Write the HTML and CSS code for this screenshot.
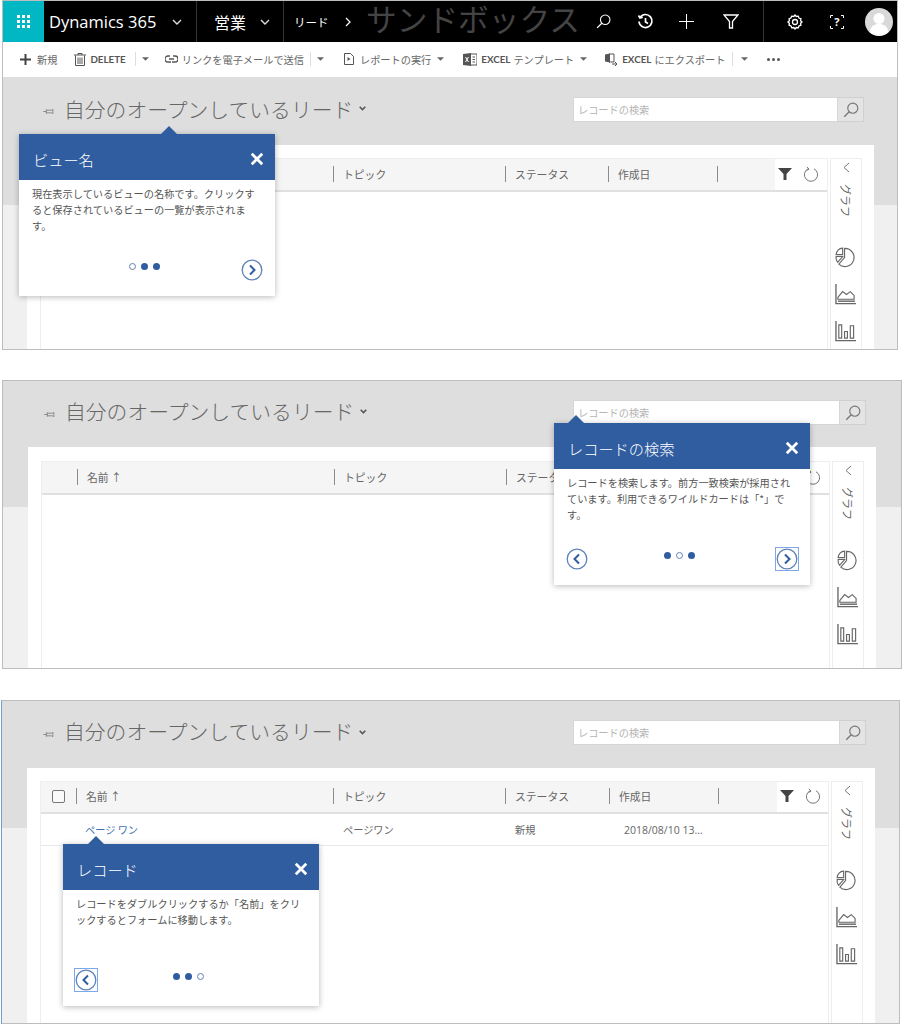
FILE: index.html
```html
<!DOCTYPE html>
<html lang="ja">
<head>
<meta charset="utf-8">
<title>リード</title>
<link rel="stylesheet" href="styles.css">
</head>
<body>
<svg class="defs" width="0" height="0" aria-hidden="true">
  <symbol id="i-search" viewBox="0 0 20 20"><circle cx="12" cy="8" r="5.600" fill="none" stroke="currentColor" stroke-width="1.300"/><path d="M8 12 2.500 17.500" fill="none" stroke="currentColor" stroke-width="1.500"/></symbol>
  <symbol id="i-chev" viewBox="0 0 10 6"><path d="M1 1l4 4 4-4" fill="none" stroke="currentColor" stroke-width="1.400"/></symbol>
  <symbol id="i-chev-bold" viewBox="0 0 10 7"><path d="M1 1l4 4 4-4" fill="none" stroke="currentColor" stroke-width="2.200"/></symbol>
  <symbol id="i-caret" viewBox="0 0 8 4"><path d="M0 0h8L4 4z" fill="currentColor"/></symbol>
  <symbol id="i-pin" viewBox="0 0 12 8"><path d="M0 4h3.500M3.500 1.500v5M3.500 2.500h6l1.500-1v5l-1.500-1h-6" fill="none" stroke="currentColor" stroke-width=".9"/></symbol>
  <symbol id="i-x" viewBox="0 0 12 12"><path d="M1.500 1.500l9 9M10.500 1.500l-9 9" fill="none" stroke="currentColor" stroke-width="2.400"/></symbol>
  <symbol id="i-next" viewBox="0 0 22 22"><circle cx="11" cy="11" r="9.800" fill="#fff" stroke="#5f83b8" stroke-width="1.300"/><path d="M9 6.500l4.500 4.500L9 15.500" fill="none" stroke="#2f5d9f" stroke-width="2"/></symbol>
  <symbol id="i-prev" viewBox="0 0 22 22"><circle cx="11" cy="11" r="9.800" fill="#fff" stroke="#5f83b8" stroke-width="1.300"/><path d="M13 6.500L8.500 11l4.500 4.500" fill="none" stroke="#2f5d9f" stroke-width="2"/></symbol>
  <symbol id="i-funnel" viewBox="0 0 14 12"><path d="M0 0h14L8.500 6v6h-3V6z" fill="currentColor"/></symbol>
  <symbol id="i-refresh" viewBox="0 0 16 16"><path d="M5 2.800A6.600 6.600 0 1 0 11 2.800" fill="none" stroke="currentColor" stroke-width="1"/><path d="M4 .8l2 2.400-2.600 1.400" fill="none" stroke="currentColor" stroke-width="1"/></symbol>
  <symbol id="i-pie" viewBox="0 0 22 22"><g fill="none" stroke="currentColor" stroke-width="1.200"><path d="M10 1.500A9.500 9.500 0 1 1 4 18L10 11z"/><path d="M8 1.200V8H1.200A7 7 0 0 1 8 1.200zM1.200 10H8l-5.300 6A8 8 0 0 1 1.200 10z"/></g></symbol>
  <symbol id="i-area" viewBox="0 0 22 22"><g fill="none" stroke="currentColor"><path d="M1 0v20.500h21" stroke-width="1.400"/><path d="M3 14l5-6 4 3 4-3 4 4v4H3z" stroke-width="1.200"/><path d="M3 18h18" stroke-width="1.500"/></g></symbol>
  <symbol id="i-bars" viewBox="0 0 22 22"><g fill="none" stroke="currentColor"><path d="M1 0v20.500h21" stroke-width="1.400"/><path d="M4 4h3v14H4zM10 11h3v7h-3zM16 5h3.500v13H16z" stroke-width="1.200"/></g></symbol>
</svg>

<section class="shot shot-a">
  <header class="topbar">
    <div class="waffle"><svg width="14" height="14" viewBox="0 0 14 14"><path fill="#fff" d="M0 0h3v3H0zM5 0h3v3H5zM10 0h3v3h-3zM0 5h3v3H0zM5 5h3v3H5zM10 5h3v3h-3zM0 10h3v3H0zM5 10h3v3H5zM10 10h3v3h-3z"/></svg></div>
    <div class="seg seg-app"><span class="app-name">Dynamics 365</span><svg class="nav-chev" width="10" height="6"><use href="#i-chev"/></svg></div>
    <div class="seg seg-area"><span class="area-name">営業</span><svg class="nav-chev" width="10" height="6"><use href="#i-chev"/></svg></div>
    <div class="seg-crumb"><span class="crumb">リード</span><svg class="crumb-sep" width="6" height="10" viewBox="0 0 6 10"><path d="M1 1l4 4-4 4" fill="none" stroke="#fff" stroke-width="1.200"/></svg></div>
    <span class="org">サンドボックス</span>
    <div class="nav-tools">
      <span class="tool"><svg width="17" height="17"><use href="#i-search"/></svg></span>
      <span class="tool"><svg width="17" height="17" viewBox="0 0 17 17"><path d="M3 4.500A6.500 6.500 0 1 1 2 8.500M1.500 2.500L3 5l2.800-.8M8.500 5v4l2.500 1.500" fill="none" stroke="currentColor" stroke-width="1.700"/></svg></span>
      <span class="tool tool-plus"><svg width="15" height="15" viewBox="0 0 15 15"><path d="M7.500 0v15M0 7.500h15" stroke="currentColor" stroke-width="1"/></svg></span>
      <span class="tool"><svg width="16" height="15" viewBox="0 0 16 15"><path d="M1 1h14L9.500 7.500V14h-3V7.500z" fill="none" stroke="currentColor" stroke-width="1.300"/></svg></span>
    </div>
    <div class="nav-user">
      <span class="tool"><svg width="16" height="16" viewBox="0 0 16 16"><circle cx="8" cy="8" r="2.500" fill="none" stroke="currentColor" stroke-width="1.300"/><path d="M8 1l1.300 1.500 2-.3.7 1.900 1.900.7-.3 2L15 8l-1.400 1.200.3 2-1.900.7-.7 1.900-2-.3L8 15l-1.300-1.500-2 .3-.7-1.900-1.900-.7.3-2L1 8l1.400-1.200-.3-2L4 3.800l.7-1.600 2 .3z" fill="none" stroke="currentColor" stroke-width="1.300"/></svg></span>
      <span class="tool help-tool"><svg class="help-frame" width="14" height="14" viewBox="0 0 14 14"><path d="M.5 3V.5H3M11 .5h2.500V3M.5 11v2.500H3M11 13.500h2.500V11" fill="none" stroke="#fff"/></svg>?</span>
      <span class="avatar"><svg width="28" height="28" viewBox="0 0 28 28"><circle cx="14" cy="14" r="14" fill="#d9d9d9"/><circle cx="14" cy="10.500" r="5.500" fill="#fff"/><path d="M4.500 24c1-6 5-8 9.500-8s8.500 2 9.500 8a14 14 0 0 1-19 0z" fill="#fff"/></svg></span>
    </div>
  </header>

  <nav class="cmdbar">
    <span class="cmd cmd-new"><svg width="11" height="11" viewBox="0 0 11 11"><path d="M5.500 0v11M0 5.500h11" stroke="#444" stroke-width="2"/></svg>新規</span>
    <span class="cmd cmd-delete"><svg width="12" height="13" viewBox="0 0 12 13"><path d="M0 2h12M4 2V.5h4V2M1.500 2.500v10h9v-10M4 4.500v6.500M6 4.500v6.500M8 4.500v6.500" fill="none" stroke="#555"/></svg><b>DELETE</b></span>
    <span class="split"></span><svg class="caret caret-a" width="7" height="4"><use href="#i-caret"/></svg>
    <span class="cmd cmd-link"><svg width="13" height="8" viewBox="0 0 13 8"><path d="M5 1H3a3 3 0 0 0 0 6h3M8 1h2a3 3 0 0 1 0 6H7M4 4h5" fill="none" stroke="#555" stroke-width="1.300"/></svg>リンクを電子メールで送信</span>
    <span class="split"></span><svg class="caret caret-a" width="7" height="4"><use href="#i-caret"/></svg>
    <span class="cmd cmd-report"><svg width="10" height="12" viewBox="0 0 10 12"><path d="M.5.500h6l3 3v8h-9z" fill="none" stroke="#555"/><path d="M3.500 4l3 2-3 2z" fill="#555"/></svg>レポートの実行</span>
    <svg class="caret caret-b" width="7" height="4"><use href="#i-caret"/></svg>
    <span class="cmd cmd-excel"><svg width="14" height="13" viewBox="0 0 14 13"><path d="M8 1h6v11H8" fill="none" stroke="#555"/><path d="M9.500 4H12M9.500 6.500H12M9.500 9H12" stroke="#555"/><path d="M0 1l8-1v13l-8-1z" fill="#555"/><path d="M2.500 4l3 5M5.500 4l-3 5" stroke="#fff"/></svg><b>EXCEL</b> テンプレート</span>
    <svg class="caret caret-b" width="7" height="4"><use href="#i-caret"/></svg>
    <span class="cmd cmd-export"><svg width="13" height="13" viewBox="0 0 13 13"><path d="M4 1h5v8H4" fill="none" stroke="#555"/><path d="M0 1.500L5 .5v9l-5-1z" fill="#555"/><path d="M7 11h5M10 9l2 2-2 2" fill="none" stroke="#555"/></svg><b>EXCEL</b> にエクスポート</span>
    <span class="split split-last"></span><svg class="caret caret-last" width="7" height="4"><use href="#i-caret"/></svg>
    <span class="more"><i></i><i></i><i></i></span>
  </nav>

  <div class="content">
    <div class="viewbar">
      <svg class="pin" width="11" height="7"><use href="#i-pin"/></svg>
      <h1 class="view-title">自分のオープンしているリード</h1>
      <svg class="view-chev" width="7" height="5"><use href="#i-chev-bold"/></svg>
      <div class="search"><span class="search-input">レコードの検索</span><span class="search-btn"><svg width="18" height="18"><use href="#i-search"/></svg></span></div>
    </div>
    <div class="card">
      <div class="grid">
        <div class="grid-head">
          <div class="th th-check"></div>
          <div class="th th-name"><span>名前 ↑</span></div>
          <div class="th th-topic"><span>トピック</span></div>
          <div class="th th-status"><span>ステータス</span></div>
          <div class="th th-date"><span>作成日</span></div>
          <div class="th th-end"><span></span></div>
          <div class="grid-tools"><svg class="funnel" width="14" height="12"><use href="#i-funnel"/></svg><svg class="refresh" width="16" height="16"><use href="#i-refresh"/></svg></div>
        </div>
      </div>
      <aside class="side">
        <svg class="side-chev" width="7" height="11" viewBox="0 0 7 11"><path d="M6 1L1 5.500 6 10" fill="none" stroke="currentColor"/></svg>
        <span class="side-label">グラフ</span>
        <svg class="side-pie" width="21" height="21"><use href="#i-pie"/></svg>
        <svg class="side-icon" width="21" height="21"><use href="#i-area"/></svg>
        <svg class="side-icon" width="21" height="21"><use href="#i-bars"/></svg>
      </aside>
    </div>
  </div>

  <div class="pop pop-a">
    <div class="pop-head"><span>ビュー名</span><svg width="14" height="14"><use href="#i-x"/></svg></div>
    <p class="pop-text">現在表示しているビューの名称です。クリックすると保存されているビューの一覧が表示されます。</p>
    <div class="pop-foot">
      <span class="pop-nav"></span>
      <span class="dots"><i class="dot dot-on"></i><i class="dot"></i><i class="dot"></i></span>
      <span class="pop-nav pop-nav-end"><svg width="22" height="22"><use href="#i-next"/></svg></span>
    </div>
  </div>
</section>

<section class="shot shot-b">
  <div class="content">
    <div class="viewbar">
      <svg class="pin" width="11" height="7"><use href="#i-pin"/></svg>
      <h1 class="view-title">自分のオープンしているリード</h1>
      <svg class="view-chev" width="7" height="5"><use href="#i-chev-bold"/></svg>
      <div class="search"><span class="search-input">レコードの検索</span><span class="search-btn"><svg width="18" height="18"><use href="#i-search"/></svg></span></div>
    </div>
    <div class="card">
      <div class="grid">
        <div class="grid-head">
          <div class="th th-check"></div>
          <div class="th th-name"><span>名前 ↑</span></div>
          <div class="th th-topic"><span>トピック</span></div>
          <div class="th th-status"><span>ステータス</span></div>
          <div class="th th-date"><span>作成日</span></div>
          <div class="th th-end"><span></span></div>
          <div class="grid-tools"><svg class="funnel" width="14" height="12"><use href="#i-funnel"/></svg><svg class="refresh" width="16" height="16"><use href="#i-refresh"/></svg></div>
        </div>
      </div>
      <aside class="side">
        <svg class="side-chev" width="7" height="11" viewBox="0 0 7 11"><path d="M6 1L1 5.500 6 10" fill="none" stroke="currentColor"/></svg>
        <span class="side-label">グラフ</span>
        <svg class="side-pie" width="21" height="21"><use href="#i-pie"/></svg>
        <svg class="side-icon" width="21" height="21"><use href="#i-area"/></svg>
        <svg class="side-icon" width="21" height="21"><use href="#i-bars"/></svg>
      </aside>
    </div>
  </div>

  <div class="pop pop-b">
    <div class="pop-head"><span>レコードの検索</span><svg width="14" height="14"><use href="#i-x"/></svg></div>
    <p class="pop-text">レコードを検索します。前方一致検索が採用されています。利用できるワイルドカードは「*」です。</p>
    <div class="pop-foot">
      <span class="pop-nav"><svg width="22" height="22"><use href="#i-prev"/></svg></span>
      <span class="dots"><i class="dot"></i><i class="dot dot-on"></i><i class="dot"></i></span>
      <span class="pop-nav pop-nav-end pop-focus"><svg width="22" height="22"><use href="#i-next"/></svg></span>
    </div>
  </div>
</section>

<section class="shot shot-c">
  <div class="content">
    <div class="viewbar">
      <svg class="pin" width="11" height="7"><use href="#i-pin"/></svg>
      <h1 class="view-title">自分のオープンしているリード</h1>
      <svg class="view-chev" width="7" height="5"><use href="#i-chev-bold"/></svg>
      <div class="search"><span class="search-input">レコードの検索</span><span class="search-btn"><svg width="18" height="18"><use href="#i-search"/></svg></span></div>
    </div>
    <div class="card">
      <div class="grid">
        <div class="grid-head">
          <div class="th th-check"><i class="checkbox"></i></div>
          <div class="th th-name"><span>名前 ↑</span></div>
          <div class="th th-topic"><span>トピック</span></div>
          <div class="th th-status"><span>ステータス</span></div>
          <div class="th th-date"><span>作成日</span></div>
          <div class="th th-end"><span></span></div>
          <div class="grid-tools"><svg class="funnel" width="14" height="12"><use href="#i-funnel"/></svg><svg class="refresh" width="16" height="16"><use href="#i-refresh"/></svg></div>
        </div>
        <div class="grid-row">
          <div class="td td-check"></div>
          <div class="td th-name td-link">ページ ワン</div>
          <div class="td th-topic">ページワン</div>
          <div class="td th-status">新規</div>
          <div class="td th-date td-date">2018/08/10 13…</div>
        </div>
      </div>
      <aside class="side">
        <svg class="side-chev" width="7" height="11" viewBox="0 0 7 11"><path d="M6 1L1 5.500 6 10" fill="none" stroke="currentColor"/></svg>
        <span class="side-label">グラフ</span>
        <svg class="side-pie" width="21" height="21"><use href="#i-pie"/></svg>
        <svg class="side-icon" width="21" height="21"><use href="#i-area"/></svg>
        <svg class="side-icon" width="21" height="21"><use href="#i-bars"/></svg>
      </aside>
    </div>
  </div>

  <div class="pop pop-c">
    <div class="pop-head"><span>レコード</span><svg width="14" height="14"><use href="#i-x"/></svg></div>
    <p class="pop-text">レコードをダブルクリックするか「名前」をクリックするとフォームに移動します。</p>
    <div class="pop-foot">
      <span class="pop-nav pop-focus"><svg width="22" height="22"><use href="#i-prev"/></svg></span>
      <span class="dots"><i class="dot"></i><i class="dot"></i><i class="dot dot-on"></i></span>
      <span class="pop-nav"></span>
    </div>
  </div>
</section>
</body>
</html>
```

FILE: styles.css
```css
* { box-sizing: border-box; }
html, body { margin: 0; padding: 0; background: #fff; }
body {
  width: 902px;
  height: 1024px;
  overflow: hidden;
  font-family: "Noto Sans CJK JP", "Open Sans", sans-serif;
  color: #555;
}
.defs { position: absolute; }

/* screenshot frames */
.shot {
  position: relative;
  overflow: visible;
  border: 1px solid #bdbdbd;
  display: flex;
  flex-direction: column;
}
.shot-a { margin-left: 2px; width: 896px; height: 350px; }
.shot-b { margin: 30px 0 0 2px; width: 900px; height: 289px; }
.shot-c { margin: 31px 0 0 1px; width: 899px; height: 324px; border-left-color: #6f9fd0; }

/* top navigation */
.topbar { display: flex; align-items: center; height: 41px; background: #000; color: #fff; flex: none; }
.waffle { width: 41px; height: 41px; background: #00b7c3; display: flex; align-items: center; justify-content: center; }
.seg { display: flex; align-items: center; height: 41px; border-right: 1px solid #333; }
.seg-app { width: 153px; padding-left: 5px; }
.seg-area { width: 87px; padding-left: 17px; }
.app-name { font-family: "Open Sans", sans-serif; font-size: 16.500px; width: 123px; white-space: nowrap; }
.area-name { font-size: 16px; width: 46px; }
.nav-chev { color: #ddd; }
.seg-crumb { display: flex; align-items: center; padding-left: 10px; width: 82px; font-size: 11.500px; }
.crumb { width: 51px; }
.crumb-sep { flex: none; }
.org { align-self: flex-start; font-size: 30.700px; line-height: 33px; color: #444; white-space: nowrap; width: 216px; height: 33px; }
.nav-tools { display: flex; height: 41px; align-items: center; padding-right: 11px; border-right: 1px solid #333; }
.tool { width: 42.500px; display: flex; justify-content: center; align-items: center; color: #fff; }
.tool-plus { padding-right: 3px; }
.nav-user { display: flex; align-items: center; padding-left: 10px; }
.help-tool { position: relative; font-size: 11px; font-weight: 700; font-family: "Open Sans", sans-serif; margin-left: -1px; }
.help-frame { position: absolute; left: 14px; top: 1px; }
.avatar { display: flex; margin-left: 7px; }

/* command bar */
.cmdbar { display: flex; align-items: center; height: 35px; background: #fff; border-top: 1px solid #fff; padding-bottom: 2px; font-size: 10.200px; color: #666; flex: none; white-space: nowrap; }
.cmd { display: flex; align-items: center; }
.cmd b { font-family: "Lato", "Open Sans", sans-serif; font-weight: 700; font-size: 9.800px; color: #555; margin-right: 3px; }
.cmd svg { flex: none; margin-right: 4px; }
.cmd-new { margin-left: 17px; }
.cmd-new svg { margin-right: 6px; }
.cmd-delete { margin-left: 17px; }
.cmd-link { margin-left: 16px; }
.cmd-report { margin-left: 20px; }
.cmd-report svg { margin-right: 6px; }
.cmd-excel { margin-left: 19px; }
.cmd-export { margin-left: 18px; }
.split { width: 1px; height: 14px; background: #ddd; margin-left: 6px; }
.split-last { margin-left: 7px; }
.caret { color: #666; flex: none; }
.caret-a { margin-left: 6px; }
.caret-b { margin-left: 6px; }
.caret-last { margin-left: 8px; }
.more { display: flex; gap: 2px; margin-left: 19px; }
.more i { width: 3px; height: 3px; border-radius: 50%; background: #555; }

/* page body */
.content {
  flex: 1;
  min-height: 0;
  display: flex;
  flex-direction: column;
  background: linear-gradient(#dedede 0 128px, #f0f0f0 128px);
}
.shot-b .content { background: linear-gradient(#dedede 0 126px, #f0f0f0 126px); }
.shot-c .content { background: linear-gradient(#dedede 0 127px, #f0f0f0 127px); }
.viewbar { display: flex; align-items: flex-start; height: 68px; padding-left: 40px; flex: none; }
.shot-b .viewbar { height: 66px; padding-left: 41px; }
.shot-c .viewbar { height: 67px; padding-left: 41px; }
.pin { color: #777; margin-top: 31px; flex: none; }
.shot-b .pin, .shot-c .pin { margin-top: 30px; }
.view-title { margin: 16px 0 0 10px; font-weight: 300; font-size: 20.800px; line-height: 32px; color: #666; white-space: nowrap; width: 295px; }
.shot-b .view-title, .shot-c .view-title { margin-top: 14px; }
.view-chev { color: #555; margin-top: 29px; flex: none; }
.shot-b .view-chev { margin-top: 28px; }
.search { display: flex; margin: 20px 33px 0 auto; height: 25px; }
.shot-b .search { margin-top: 19px; margin-right: 35px; }
.shot-c .search { margin-top: 19px; margin-right: 33px; }
.search-input { width: 265px; background: #fff; border: 1px solid #d6d6d6; padding-left: 4px; font-size: 10.200px; line-height: 24px; color: #b5b5b5; }
.shot-b .search-input, .shot-c .search-input { width: 267px; }
.search-btn { width: 26px; background: #e4e4e4; border: 1px solid #d0d0d0; border-left: none; display: flex; align-items: center; justify-content: center; color: #777; }

/* card */
.card { flex: 1; min-height: 0; display: flex; background: #fff; margin: 0 23px 0 24px; padding: 13px 12px 0 13px; gap: 2px; }
.shot-b .card { margin: 0 25px 0 25px; padding-top: 14px; }
.shot-c .card { margin: 0 24px 0 25px; }
.grid { flex: 1; border-left: 1px solid #eee; border-right: 1px solid #eee; min-width: 0; }
.grid-head { display: flex; align-items: stretch; height: 34px; background: #f5f5f5; border-top: 1px solid #eee; border-bottom: 2px solid #e0e0e0; padding-bottom: 2px; font-size: 10.800px; color: #666; }
.shot-c .grid-head { height: 33px; }
.th { display: flex; align-items: center; flex: none; }
.th span { display: block; height: 16px; line-height: 16px; padding-left: 9px; border-left: 1px solid #8c8c8c; }
.th-check { width: 35px; padding-left: 11px; }
.th-name { width: 257px; }
.th-topic { width: 172px; }
.th-status { width: 103px; }
.shot-c .th-status { width: 104px; }
.th-date { width: 109px; }
.th-end { width: 20px; }
.checkbox { display: block; width: 13px; height: 13px; border: 1px solid #777; border-radius: 2px; background: #fafafa; }
.grid-tools { margin-left: auto; width: 52px; margin-bottom: -2px; background: #fff; display: flex; align-items: center; padding: 0 0 2px 3px; gap: 11px; }
.shot-c .grid-tools { width: 51px; }
.funnel { color: #444; }
.refresh { color: #777; }
.grid-row { display: flex; height: 32px; align-items: center; border-bottom: 1px solid #e8e8e8; font-size: 10.200px; color: #666; }
.td { flex: none; padding-left: 10px; white-space: nowrap; }
.td-check { width: 35px; }
.td-link { color: #3a6fb0; padding-left: 9px; }
.td-date { padding-left: 15px; font-family: "Open Sans", "Noto Sans CJK JP", sans-serif; font-size: 10.500px; }

/* side rail */
.side { width: 32px; flex: none; border: 1px solid #eee; border-bottom: none; display: flex; flex-direction: column; align-items: center; color: #666; }
.side-chev { margin-top: 3px; color: #777; }
.side-label { writing-mode: vertical-rl; text-orientation: sideways; font-size: 11px; line-height: 14px; margin-top: 11px; color: #666; }
.side-pie { margin-top: 30px; margin-right: 2px; }
.side-icon { margin-top: 16px; margin-right: 2px; }

/* tour popover */
.pop { position: absolute; width: 256px; height: 162px; background: #fff; box-shadow: 0 1px 6px rgba(0, 0, 0, .28); display: flex; flex-direction: column; }
.pop::before { content: ""; position: absolute; top: -8px; width: 0; height: 0; border-left: 8px solid transparent; border-right: 8px solid transparent; border-bottom: 8px solid #2f5d9f; }
.pop-a { left: 16px; top: 133px; }
.pop-a::before { left: 142px; }
.pop-b { left: 551px; top: 42px; }
.pop-b::before { left: 14px; }
.pop-c { left: 61px; top: 143px; }
.pop-c::before { left: 25px; }
.pop-head { flex: none; height: 46px; background: #2f5d9f; color: #fff; display: flex; align-items: center; justify-content: space-between; padding: 4px 11px 0 14px; font-size: 15.200px; font-weight: 300; }
.pop-text { margin: 6px 0 0 13px; width: 230px; height: 64px; font-size: 10.200px; line-height: 16px; color: #555; }
.pop-foot { display: grid; grid-template-columns: 1fr auto 1fr; padding: 0 12px; margin-top: 9px; }
.pop-nav { display: flex; width: 22px; height: 22px; }
.pop-nav-end { justify-self: end; }
.pop-focus { outline: 1px solid #7fa8e8; }
.dots { display: flex; gap: 5px; margin-right: 6px; padding-top: 4px; height: 11px; }
.dot { display: block; width: 7px; height: 7px; border-radius: 50%; background: #2f5d9f; }
.dot-on { background: #fff; border: 1px solid #5f83b8; }
```
